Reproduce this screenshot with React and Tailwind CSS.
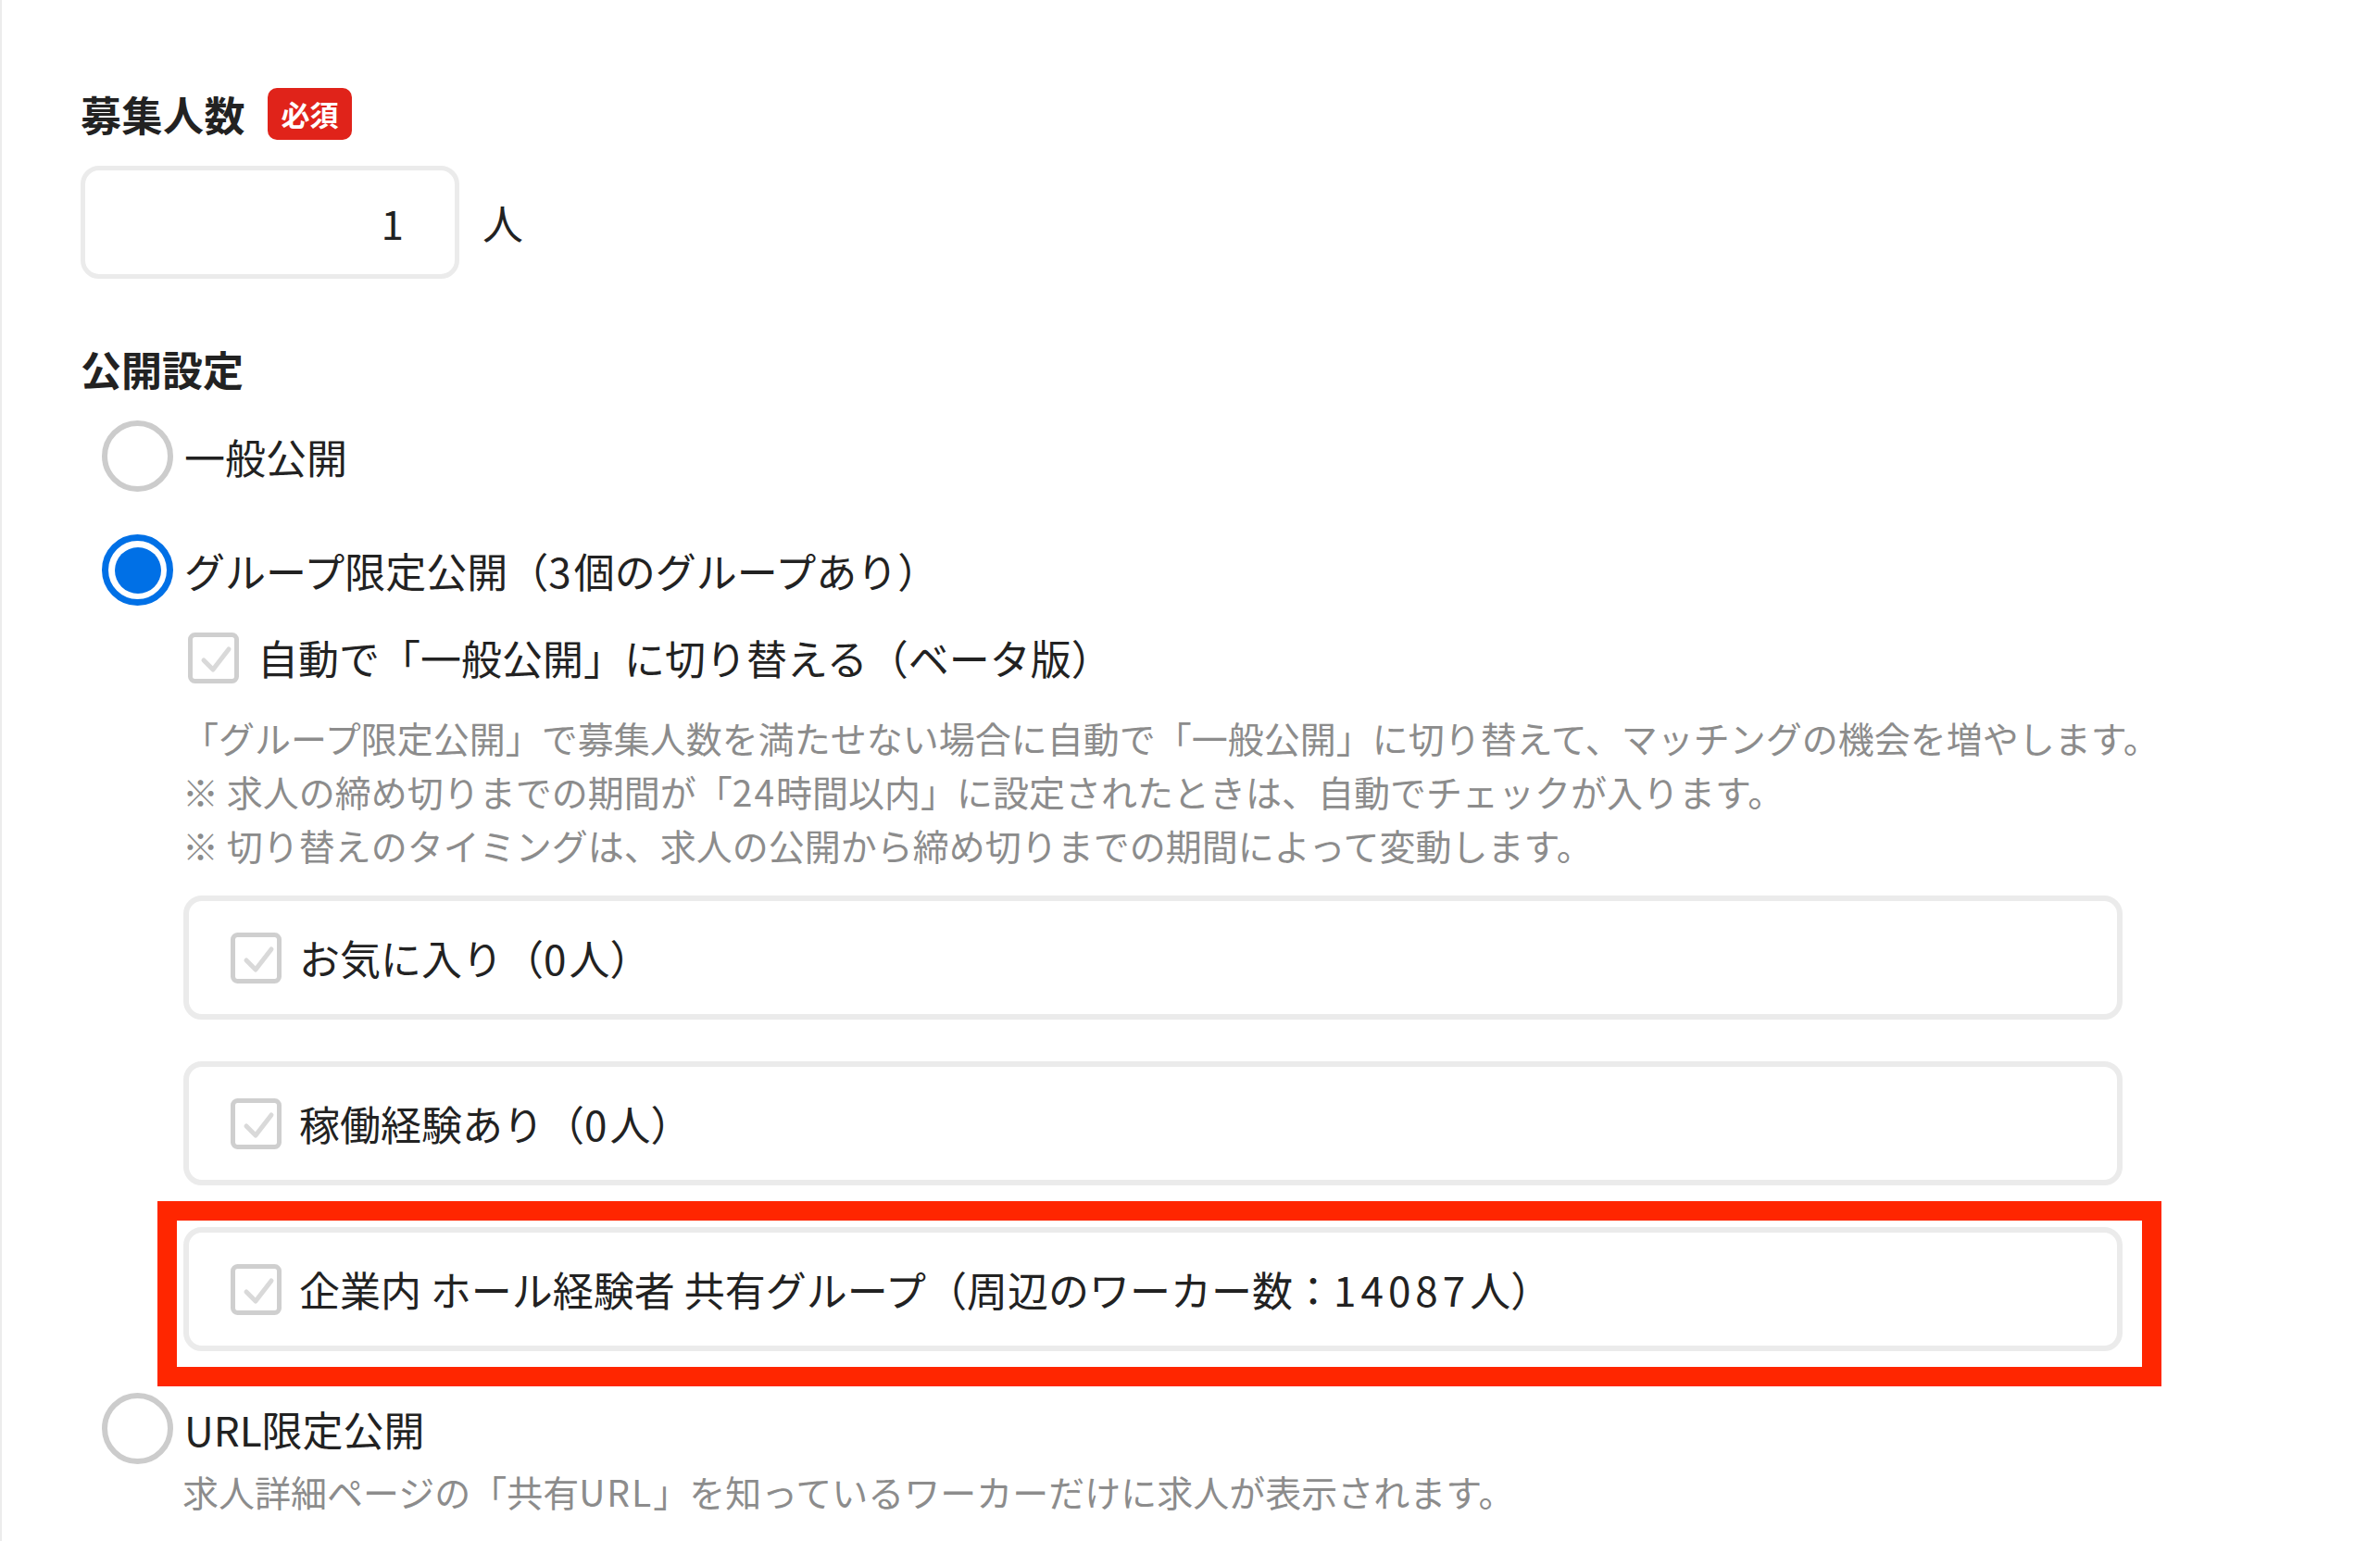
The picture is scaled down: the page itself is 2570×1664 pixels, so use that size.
import React from "react";

const FONT = { fontFamily: '"Noto Sans CJK JP", "Noto Sans", sans-serif' };

function CheckBox() {
  return (
    <svg width="55" height="55" viewBox="0 0 55 55" className="shrink-0">
      <rect x="2.5" y="2.5" width="50" height="50" rx="5" fill="#fff" stroke="#cfcfcf" strokeWidth="5" />
      <path d="M17 30 L27 40 L44 18" fill="none" stroke="#d9d9d9" strokeWidth="5" strokeLinecap="round" strokeLinejoin="round" />
    </svg>
  );
}

function Radio({ checked }) {
  if (checked) {
    return (
      <div className="w-[77px] h-[77px] rounded-full border-[7px] border-[#0070e6] flex items-center justify-center shrink-0">
        <div className="w-[50px] h-[50px] rounded-full bg-[#0070e6]" />
      </div>
    );
  }
  return <div className="w-[77px] h-[77px] rounded-full border-[6px] border-[#cccccc] bg-white shrink-0" />;
}

function GroupBox({ children }) {
  return (
    <div className="w-[2094px] h-[134px] border-[6px] border-[#ebebeb] rounded-[20px] flex items-center pl-[45px] gap-[19px]">
      <CheckBox />
      <span className="text-[44px] leading-[56px] text-[#222]">{children}</span>
    </div>
  );
}

export default function App() {
  return (
    <div style={FONT} className="relative w-[2570px] h-[1664px] bg-white border-l-2 border-[#ececec] overflow-hidden">
      <div className="pl-[85px] pt-[95px] flex flex-col">
        {/* 募集人数 */}
        <div className="flex items-center gap-[24px] h-[56px]">
          <span className="text-[44px] leading-[56px] font-bold text-[#222] tracking-[0.5px]">募集人数</span>
          <span className="w-[91px] h-[56px] rounded-[10px] bg-[#e0231a] text-white font-bold text-[31px] leading-[56px] flex items-center justify-center">
            必須
          </span>
        </div>
        <div className="flex items-center mt-[28px] gap-[25px]">
          <div className="w-[409px] h-[122px] border-[5px] border-[#ebebeb] rounded-[20px] flex items-center justify-end pr-[55px] text-[44px] text-[#222]">
            1
          </div>
          <span className="text-[44px] text-[#222]">人</span>
        </div>

        {/* 公開設定 */}
        <div className="mt-[69px] h-[56px] flex items-center">
          <span className="text-[44px] leading-[56px] font-bold text-[#222]">公開設定</span>
        </div>

        <div className="mt-[28px] ml-[23px] flex items-center gap-[12px]">
          <Radio checked={false} />
          <span className="text-[44px] leading-[56px] text-[#222]">一般公開</span>
        </div>

        <div className="mt-[46px] ml-[23px] flex items-center gap-[12px]">
          <Radio checked={true} />
          <span className="text-[44px] leading-[56px] text-[#222]">
            グループ限定公開（<span className="tracking-[3px]">3</span>個のグループあり）
          </span>
        </div>

        <div className="ml-[111px] flex flex-col">
          <div className="mt-[28px] ml-[5px] flex items-center gap-[20px]">
            <CheckBox />
            <span className="text-[44px] leading-[56px] text-[#222]">自動で「一般公開」に切り替える（ベータ版）</span>
          </div>
          <div className="mt-[29px] -ml-[1px] text-[39px] leading-[58px] text-[#8c8c8c]">
            <p>「グループ限定公開」で募集人数を満たせない場合に自動で「一般公開」に切り替えて、マッチングの機会を増やします。</p>
            <p>※ 求人の締め切りまでの期間が「<span className="tracking-[2px]">24</span>時間以内」に設定されたときは、自動でチェックが入ります。</p>
            <p>※ 切り替えのタイミングは、求人の公開から締め切りまでの期間によって変動します。</p>
          </div>
          <div className="mt-[26px] flex flex-col gap-[45px]">
            <GroupBox>
              お気に入り（<span className="tracking-[3px]">0</span>人）
            </GroupBox>
            <GroupBox>
              稼働経験あり（<span className="tracking-[3px]">0</span>人）
            </GroupBox>
            <GroupBox>
              企業内 ホール経験者 共有グループ（周辺のワーカー数：<span className="tracking-[5px]">14087</span>人）
            </GroupBox>
          </div>
        </div>

        <div className="mt-[45px] ml-[23px] flex items-center gap-[12px]">
          <Radio checked={false} />
          <span className="text-[44px] leading-[56px] text-[#222]">URL限定公開</span>
        </div>
        <div className="ml-[110px] text-[39px] leading-[58px] text-[#8c8c8c]">
          求人詳細ページの「共有<span className="tracking-[2px]">URL</span>」を知っているワーカーだけに求人が表示されます。
        </div>
      </div>

      {/* annotation highlight */}
      <div className="absolute left-[168px] top-[1297px] w-[2164px] h-[200px] border-[21px] border-[#ff2600] pointer-events-none" />
    </div>
  );
}
